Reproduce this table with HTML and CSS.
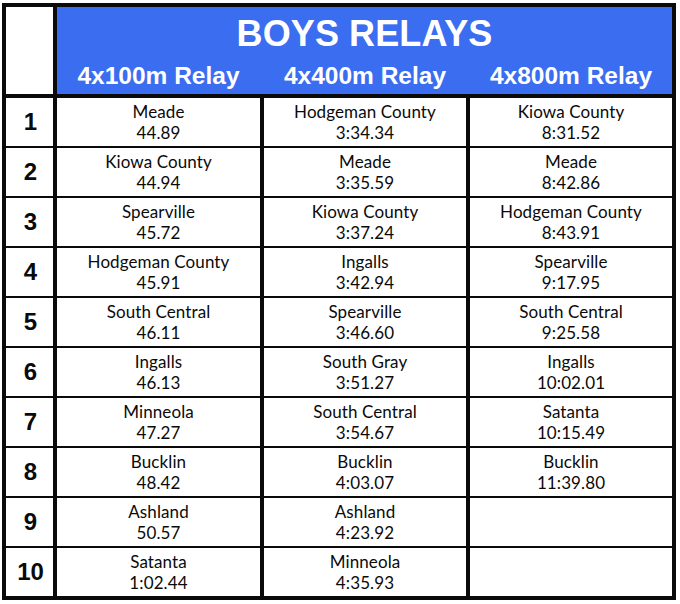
FILE: index.html
```html
<!DOCTYPE html>
<html lang="en">
<head>
<meta charset="utf-8">
<title>Boys Relays</title>
<link rel="stylesheet" href="styles.css">
</head>
<body>
<div class="board">
  <div class="head">
    <div class="corner"></div>
    <div class="banner">
      <div class="title">BOYS RELAYS</div>
      <div class="events">
        <div class="event">4x100m Relay</div>
        <div class="event">4x400m Relay</div>
        <div class="event">4x800m Relay</div>
      </div>
    </div>
  </div>
  <div class="results">
    <div class="rank">1</div>
    <div class="cell"><span>Meade</span><span>44.89</span></div>
    <div class="cell"><span>Hodgeman County</span><span>3:34.34</span></div>
    <div class="cell"><span>Kiowa County</span><span>8:31.52</span></div>

    <div class="rank">2</div>
    <div class="cell"><span>Kiowa County</span><span>44.94</span></div>
    <div class="cell"><span>Meade</span><span>3:35.59</span></div>
    <div class="cell"><span>Meade</span><span>8:42.86</span></div>

    <div class="rank">3</div>
    <div class="cell"><span>Spearville</span><span>45.72</span></div>
    <div class="cell"><span>Kiowa County</span><span>3:37.24</span></div>
    <div class="cell"><span>Hodgeman County</span><span>8:43.91</span></div>

    <div class="rank">4</div>
    <div class="cell"><span>Hodgeman County</span><span>45.91</span></div>
    <div class="cell"><span>Ingalls</span><span>3:42.94</span></div>
    <div class="cell"><span>Spearville</span><span>9:17.95</span></div>

    <div class="rank">5</div>
    <div class="cell"><span>South Central</span><span>46.11</span></div>
    <div class="cell"><span>Spearville</span><span>3:46.60</span></div>
    <div class="cell"><span>South Central</span><span>9:25.58</span></div>

    <div class="rank">6</div>
    <div class="cell"><span>Ingalls</span><span>46.13</span></div>
    <div class="cell"><span>South Gray</span><span>3:51.27</span></div>
    <div class="cell"><span>Ingalls</span><span>10:02.01</span></div>

    <div class="rank">7</div>
    <div class="cell"><span>Minneola</span><span>47.27</span></div>
    <div class="cell"><span>South Central</span><span>3:54.67</span></div>
    <div class="cell"><span>Satanta</span><span>10:15.49</span></div>

    <div class="rank">8</div>
    <div class="cell"><span>Bucklin</span><span>48.42</span></div>
    <div class="cell"><span>Bucklin</span><span>4:03.07</span></div>
    <div class="cell"><span>Bucklin</span><span>11:39.80</span></div>

    <div class="rank">9</div>
    <div class="cell"><span>Ashland</span><span>50.57</span></div>
    <div class="cell"><span>Ashland</span><span>4:23.92</span></div>
    <div class="cell"></div>

    <div class="rank">10</div>
    <div class="cell"><span>Satanta</span><span>1:02.44</span></div>
    <div class="cell"><span>Minneola</span><span>4:35.93</span></div>
    <div class="cell"></div>
  </div>
</div>
</body>
</html>
```

FILE: styles.css
```css
html, body {
  margin: 0;
  padding: 0;
  background: #ffffff;
}

body {
  padding: 3px 0 0 2px;
}

.board {
  width: 666px;
  background: #0a0a0a;
  padding: 4px;
  display: flex;
  flex-direction: column;
  gap: 4px;
}

.head {
  display: grid;
  grid-template-columns: 47px 615px;
  column-gap: 4px;
  height: 87px;
}

.corner {
  background: #ffffff;
}

.banner {
  background: #3a6df0;
  color: #ffffff;
  font-family: "Liberation Sans", Arial, sans-serif;
  font-weight: bold;
  display: flex;
  flex-direction: column;
  align-items: stretch;
  padding-top: 7px;
}

.title {
  font-size: 36px;
  line-height: 40px;
  text-align: center;
  letter-spacing: 0.1px;
}

.events {
  display: grid;
  grid-template-columns: 203px 202px 202px;
  column-gap: 4px;
  margin-top: 8px;
}

.event {
  font-size: 24.5px;
  line-height: 28px;
  text-align: center;
}

.results {
  display: grid;
  grid-template-columns: 47px 203px 202px 202px;
  grid-auto-rows: 48px;
  column-gap: 4px;
  row-gap: 2px;
}

.rank {
  background: #ffffff;
  font-family: "Liberation Sans", Arial, sans-serif;
  font-weight: bold;
  font-size: 24px;
  color: #0a0a0a;
  display: flex;
  align-items: center;
  justify-content: center;
  padding-left: 2px;
}

.cell {
  background: #ffffff;
  font-family: Lato, "Open Sans", sans-serif;
  font-size: 17px;
  line-height: 21px;
  letter-spacing: 0.1px;
  color: #0a0a0a;
  display: flex;
  flex-direction: column;
  align-items: center;
  justify-content: center;
}
```
